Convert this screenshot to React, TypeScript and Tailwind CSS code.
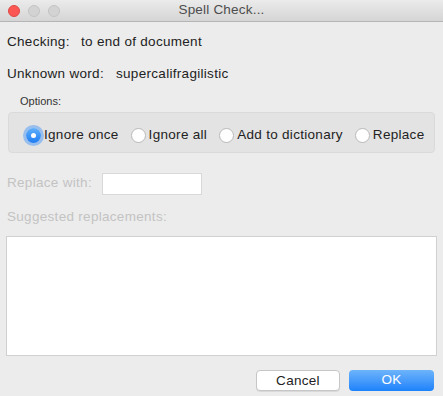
import React from 'react';

const font = { fontFamily: '"Helvetica Neue", "Liberation Sans", Arial, sans-serif' };

function Radio({ label, checked }: { label: string; checked?: boolean }) {
  return (
    <div className="flex items-center">
      {checked ? (
        <span className="w-[15px] h-[15px] rounded-full bg-gradient-to-b from-[#5fb0fb] to-[#1c7cf2] flex items-center justify-center shadow-[0_0_0_3px_rgba(90,160,245,0.55)]">
          <span className="w-[5px] h-[5px] rounded-full bg-white" />
        </span>
      ) : (
        <span className="w-[15px] h-[15px] rounded-full bg-white border border-[#b9b9b9]" />
      )}
      <span className="ml-[3px] text-[13.5px] tracking-[0.3px] text-[#222]">{label}</span>
    </div>
  );
}

export default function App() {
  return (
    <div className="w-[443px] h-[396px] bg-[#ececec] flex flex-col overflow-hidden" style={font}>
      {/* Title bar */}
      <div className="h-[22px] flex items-center relative bg-gradient-to-b from-[#ebebeb] to-[#d5d5d5] border-b border-[#b5b5b5]">
        <div className="flex items-center gap-[8px] pl-[8px]">
          <span className="w-[12px] h-[12px] rounded-full bg-[#fc5753] border border-[#df4744]" />
          <span className="w-[12px] h-[12px] rounded-full bg-[#d3d3d3] border border-[#c4c4c4]" />
          <span className="w-[12px] h-[12px] rounded-full bg-[#d3d3d3] border border-[#c4c4c4]" />
        </div>
        <div className="absolute inset-0 flex items-center justify-center text-[13.5px] tracking-[0.2px] text-[#4d4d4d]">
          Spell Check...
        </div>
      </div>

      <div className="flex flex-col px-[7px] text-[13.5px] tracking-[0.3px] text-[#222]">
        <div className="flex mt-[12px] h-[16px] items-center">
          <span className="w-[74px]">Checking:</span>
          <span>to end of document</span>
        </div>
        <div className="flex mt-[16px] h-[16px] items-center">
          <span className="w-[109px]">Unknown word:</span>
          <span>supercalifragilistic</span>
        </div>

        <div className="mt-[11px] ml-[13px] text-[11px] tracking-normal text-[#333]">Options:</div>
        <div className="mt-[2px] mx-[1px] h-[41px] bg-[#e3e3e3] border border-[#dadada] rounded-[4px] flex items-center gap-[12px] pl-[17px] pt-[6px]">
          <Radio label="Ignore once" checked />
          <Radio label="Ignore all" />
          <Radio label="Add to dictionary" />
          <Radio label="Replace" />
        </div>

        <div className="flex items-center mt-[20px]">
          <span className="w-[95px] text-[#c3c3c3]">Replace with:</span>
          <div className="w-[100px] h-[22px] bg-white border border-[#d8d8d8]" />
        </div>
        <div className="mt-[12px] text-[#c3c3c3]">Suggested replacements:</div>
        <div className="mt-[9px] -mx-[1px] h-[120px] bg-white border border-[#d0d0d0]" />

        <div className="flex justify-end gap-[9px] mt-[14px] pr-[2px]">
          <button className="w-[84px] h-[21px] bg-white border border-[#c6c6c6] rounded-[4px] text-[13.5px] text-[#222] shadow-[0_1px_0_rgba(0,0,0,0.08)]">
            Cancel
          </button>
          <button className="w-[85px] h-[21px] rounded-[4px] bg-gradient-to-b from-[#6cb3fa] to-[#1a82fb] text-[13.5px] text-white">
            OK
          </button>
        </div>
      </div>
    </div>
  );
}
